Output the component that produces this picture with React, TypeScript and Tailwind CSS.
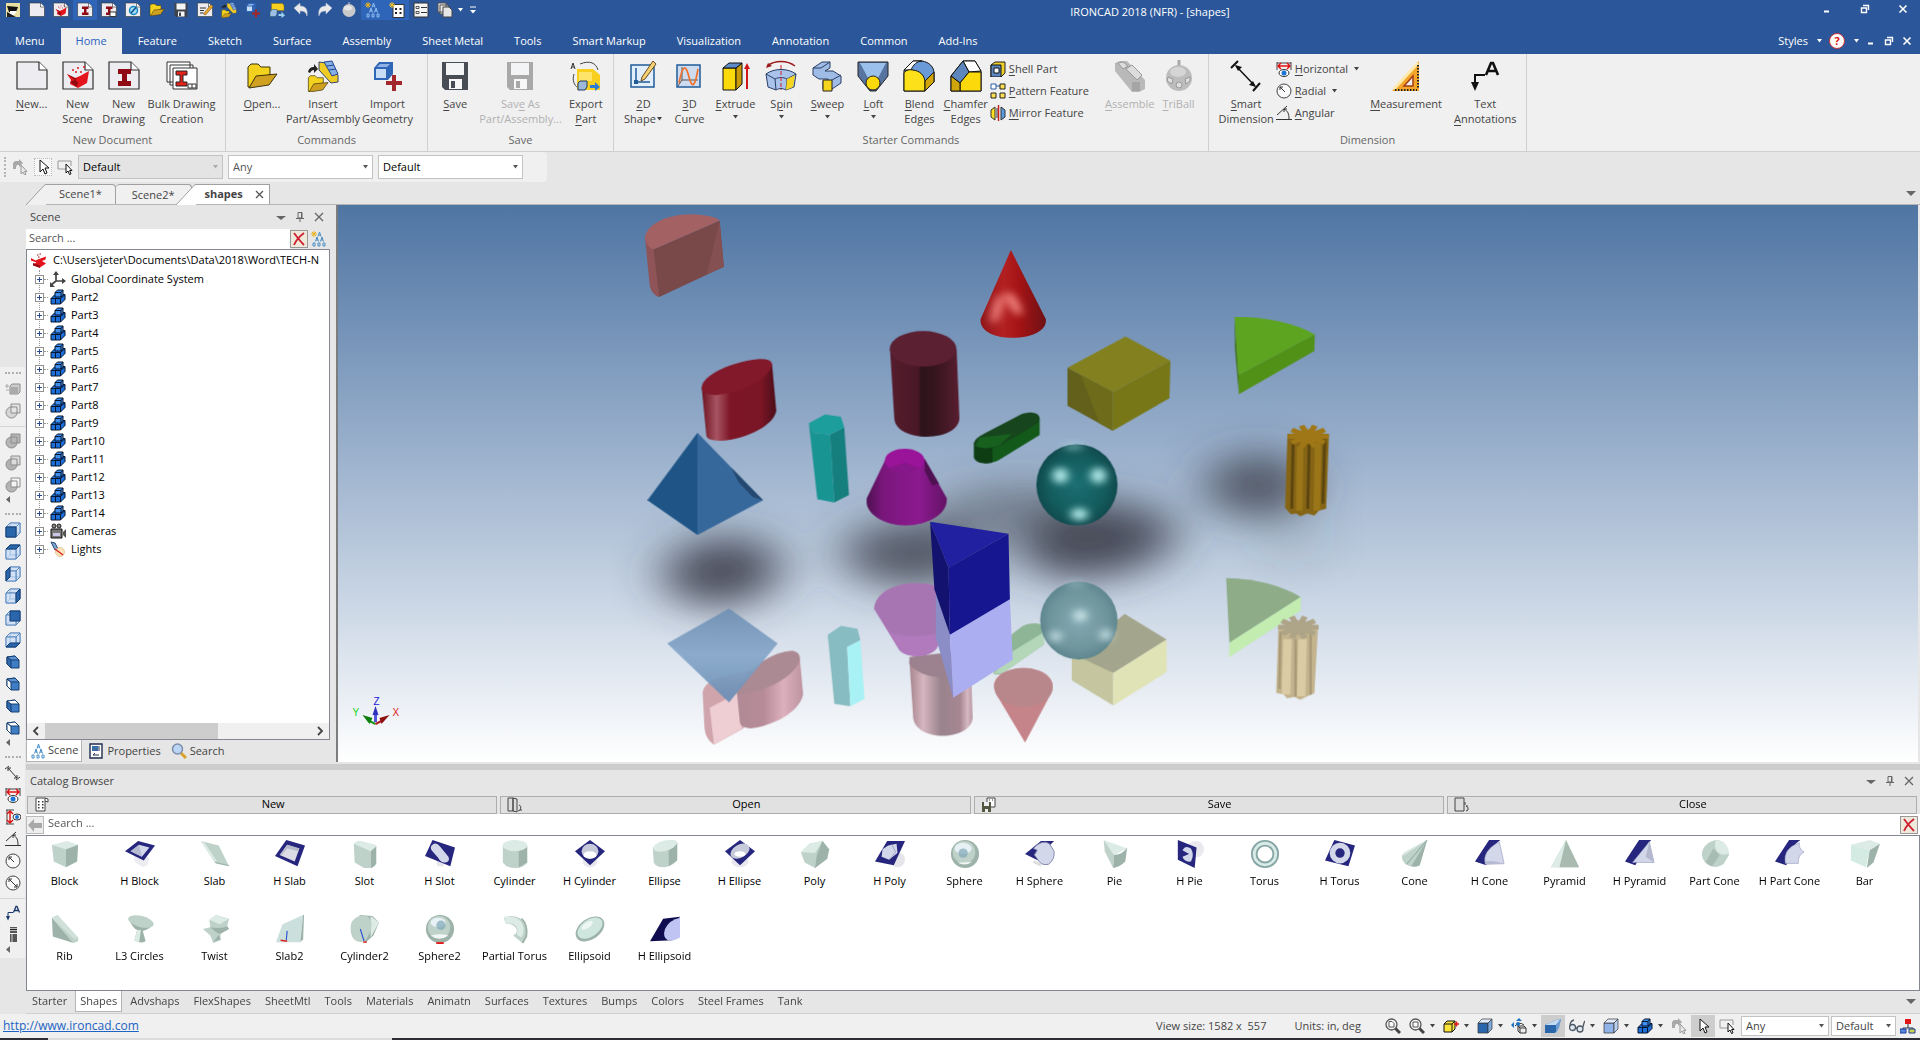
import React from 'react';

type Kids = { children?: React.ReactNode };

const Ico = ({ size = 16, box = 16, children }: Kids & { size?: number; box?: number }) => (
  <svg width={size} height={size} viewBox={`0 0 ${box} ${box}`} className="shrink-0" aria-hidden="true">
    {children}
  </svg>
);

// "_" marks the keyboard mnemonic, e.g. "Sav_e"
const Mnemonic = ({ text }: { text: string }) => {
  const at = text.indexOf('_');
  if (at < 0) return <span>{text}</span>;
  return (
    <span>
      {text.slice(0, at)}
      <span className="underline underline-offset-2">{text[at + 1]}</span>
      {text.slice(at + 2)}
    </span>
  );
};

const Caret = ({ className = 'text-[#444]' }: { className?: string }) => (
  <svg width="7" height="4" viewBox="0 0 7 4" className={`shrink-0 ${className}`} aria-hidden="true">
    <path d="M1 0h5L3.500 3.500z" fill="currentColor" />
  </svg>
);

/* ---------- shared glyphs ---------- */

const page = (
  <>
    <path d="M1 2h22l8 8v19H1z" fill="#ececf1" stroke="#333" strokeWidth="1.200" />
    <path d="M23 2v8h8" fill="#fff" stroke="#333" strokeWidth="1.200" />
  </>
);
const beam = <path d="M10 9h13v5h-4v7h4v5H10v-5h4v-7h-4z" fill="#8f0a12" />;
const redBlob = (
  <>
    <path d="M5 14l8 4 5-2 9-5-2 12-9 5-8-4 1-4z" fill="#e3141c" />
    <path d="M5 14l10 5-7 3 7 5 1-5z" fill="#8f0a12" />
    <path d="M10 10h2M15 8h2M18 12h2M21 7h2M13 12h2" stroke="#e3141c" strokeWidth="1.500" />
  </>
);
const folder = (
  <>
    <path d="M2 7l3-3h7l3 3h9v7L4 27H2z" fill="#f3d21d" stroke="#3d3208" />
    <path d="M3 28l7-12 21-2-8 11z" fill="#d0a021" stroke="#3d3208" />
  </>
);
const floppy = (body: string) => (
  <>
    <path d="M3 2h26v28H6l-3-3z" fill={body} />
    <path d="M7 3h18v12H7z" fill="#f3f4f6" />
    <path d="M10 19h13v10H10z" fill="#f7f7f7" />
    <path d="M12 21h4v7h-4z" fill={body} />
  </>
);
const cubeAdd = (
  <>
    <path d="M2 8l5-6h14v12l-5 6H2z" fill="#2f66b8" />
    <path d="M4 9h10v9H4z" fill="#c9dcf5" />
    <path d="M5 7l3-3h10l-3 3z" fill="#8fb3e4" />
    <path d="M20 15h4v6h6v4h-6v6h-4v-6h-6v-4h6z" fill="#a3262a" />
  </>
);
const insertPart = (
  <>
    <path d="M1 12c1-4 3-5 6-5V4l4 5-4 4v-3c-2 0-3 1-4 3z" fill="#222" />
    <path d="M12 2l7 1 12 12v7l-7 1-12-13z" fill="#f0cb23" stroke="#33456b" />
    <path d="M17 2l8-1 6 13-6 2z" fill="#86aee6" stroke="#27468c" />
    <path d="M20 6l7-1M22 10l7-1" stroke="#27468c" />
    <g transform="translate(0 13) scale(.68)">{folder}</g>
  </>
);
const exportPart = (
  <>
    <path d="M1 9l2-6 2 6M2 7h2" stroke="#333" fill="none" />
    <path d="M10 4c10-4 16-1 18 6M4 14c-2 6 0 11 4 14" stroke="#444" fill="none" />
    <path d="M7 9h16l7 6v15H7z" fill="#f8cf1e" />
    <path d="M9 12h13v9H9z" fill="#ffe46a" />
    <path d="M8 23l2-2h7v6l-2 3H8z" fill="#9db9d8" stroke="#1f3864" />
    <path d="M20 25h5v-3l5 5-5 4v-3h-5z" fill="#2b7bd6" />
  </>
);
const bluePart = (
  <>
    <path d="M1 9.500l4-4h10v5L10.500 15H1z" fill="#1c6fd8" stroke="#04152e" />
    <path d="M1 9.500h9.500V15M10.500 9.500l4.500-4" fill="none" stroke="#04152e" />
    <path d="M5 3.500L7.500 1H13v4.500L11 8H5z" fill="#3f8ff0" stroke="#04152e" />
    <path d="M5 3.500h6V8M11 3.500L13 1M5.500 10v5" fill="none" stroke="#04152e" />
  </>
);
const cursor = <path d="M5 1v12l3-3 2 5 2-1-2-5h4z" fill="#fff" stroke="#111" />;
const boxCursor = (
  <>
    <path d="M10 10H1V2h13v5" fill="none" stroke="#999" />
    <path d="M9 5v9l2-2 1.500 3.500 1.500-.6-1.400-3.400H15z" fill="#fff" stroke="#111" />
  </>
);
const grayCursor = (
  <>
    <path d="M1 10V4l2-2h4V0l4 4-4 4V6H5L4 8v2z" fill="#a9a9a9" />
    <path d="M9 6v9l2-2 1.500 3 1.500-.6-1.400-3H15z" fill="#e8e8e8" stroke="#999" />
  </>
);
const treeLetters = (star: boolean, c: string) => (
  <>
    {star && <path d="M3 0v6M0 3h6M1 1l4 4M5 1L1 5" stroke="#e8b21c" />}
    <path d="M7 5.500L8.500 1 10 5.500M7.500 4h2M4.500 10.500L6 6l1.500 4.500M9.500 10.500L11 6l1.500 4.500M5 9h2M10 9h2" fill="none" stroke={c} />
    <path d="M2 15h2v-3H2zM7 15h2v-3H7zM12 15h2v-3h-2z" fill="none" stroke={c} />
  </>
);
const catalogGlyph = (
  <>
    <path d="M2 1h9v13H2zM11 1l3 1v3l-3-1" fill="#fff" stroke="#444" />
    <path d="M4 4h1.500v1.500H4zM8 4h1.500v1.500H8zM4 7h1.500v1.500H4zM8 7h1.500v1.500H8zM4 10h1.500v1.500H4zM8 10h1.500v1.500H8z" fill="#333" />
  </>
);
const redX = <path d="M3 2c3 4 6 8 10 12M13 2C9 5 5 9 3 14" stroke="#cf2030" strokeWidth="1.800" fill="none" />;

/* ---------- quick access bar ---------- */

const quick: { name: string; on?: boolean; box?: number; art: React.ReactNode }[] = [
  { name: 'New', box: 32, art: page },
  { name: 'New Scene', box: 32, art: <>{page}{redBlob}</> },
  { name: 'New Drawing', on: true, box: 32, art: <>{page}{beam}</> },
  { name: 'Bulk Drawing', box: 32, art: <>{page}{beam}<path d="M18 20h12v9H18z" fill="#fff" stroke="#333" strokeWidth="2" /></> },
  { name: 'New Document', box: 32, art: <>{page}<circle cx="17" cy="17" r="8" fill="#9fdcf4" stroke="#1686c4" strokeWidth="3" /><path d="M12 22l10-11" stroke="#0b4f86" strokeWidth="3" /></> },
  { name: 'Open', box: 32, art: folder },
  { name: 'Save', box: 32, art: floppy('#3f444c') },
  { name: 'Edit', box: 32, art: <>{page}<path d="M6 12h12M6 17h8M6 22h7" stroke="#333" strokeWidth="2" /><path d="M13 24L28 5l4 4-15 17z" fill="#f0a929" stroke="#5c3a06" /></> },
  { name: 'Insert Part', box: 32, art: insertPart },
  { name: 'Import Geometry', box: 32, art: cubeAdd },
  { name: 'Export Part', box: 32, art: <><path d="M5 3h22l3 4v10H5z" fill="#f8cf1e" stroke="#8a6d08" /><path d="M2 20l4-5h10v9l-3 5H2z" fill="#9dc0e2" stroke="#27506f" /><path d="M19 24h6v-5l7 8-7 5v-4h-6z" fill="#9ad0ee" /></> },
  { name: 'Undo', art: <path d="M1 6l6-5v3c6 0 8 4 7 10-1-4-3-5-7-5v3z" fill="#e9e9e9" stroke="#b9c4d8" strokeWidth=".5" /> },
  { name: 'Redo', art: <path d="M15 6L9 1v3C3 4 1 8 2 14c1-4 3-5 7-5v3z" fill="#e9e9e9" stroke="#b9c4d8" strokeWidth=".5" /> },
  { name: 'TriBall', art: <><path d="M8 0v4" stroke="#ccc" /><circle cx="8" cy="8.500" r="6.500" fill="#c9c9c9" /><ellipse cx="7" cy="6" rx="4" ry="2.500" fill="#e6e6e6" /></> },
  { name: 'Scene Browser', on: true, art: treeLetters(true, '#8fbcf0') },
  { name: 'Catalog Browser', on: true, art: <><path d="M4 2.500h11v13H4z" fill="#fff" stroke="#333" /><path d="M6 6h2v2H6zM10.500 6h2v2h-2zM6 10h2v2H6zM10.500 10h2v2h-2z" fill="#222" /><path d="M3 0v6M0 3h6M1 1l4 4M5 1L1 5" stroke="#f3c52c" /></> },
  { name: 'Properties', art: <><path d="M1 1h14v14H1z" fill="#f4f4f4" stroke="#333" /><path d="M3 4.500h3v2H3zM3 9.500h3v2H3z" fill="none" stroke="#333" strokeWidth=".8" /><path d="M8 5.500h6M8 10.500h6" stroke="#333" /></> },
  { name: 'Windows', art: <><path d="M1 1h8v9H1zM3 3h8v9H3z" fill="#e6e6e6" stroke="#555" /><path d="M6 5h6l3 3v7H6z" fill="#e6e6e6" stroke="#444" /></> },
];

const WindowKeys = ({ gap }: { gap: string }) => (
  <div className={`flex items-center ${gap} text-white`}>
    <button aria-label="Minimize"><Ico size={10} box={10}><path d="M2 7.500h5" stroke="#fff" strokeWidth="2" /></Ico></button>
    <button aria-label="Restore"><Ico size={10} box={10}><path d="M3 1.500h5.500V6M1.500 4h5v4.500h-5z" fill="none" stroke="#fff" strokeWidth="1.400" /></Ico></button>
    <button aria-label="Close"><Ico size={10} box={10}><path d="M1.500 1.500l7 7M8.500 1.500l-7 7" stroke="#fff" strokeWidth="1.600" /></Ico></button>
  </div>
);

const TitleBar = () => (
  <header className="flex h-7 items-start bg-[#2b579a] text-white">
    <div className="flex items-center">
      <div className="flex h-5 w-[25px] items-center justify-center">
        <Ico><path d="M1 1h14v14H1z" fill="#e9dfa0" /><path d="M2 4l11 1-2 5H4z" fill="#111" /><path d="M5 9h7l-3 4-4 1z" fill="#fff" /><path d="M2 10l9 5H2z" fill="#222" /></Ico>
      </div>
      {quick.map((q) => (
        <button key={q.name} aria-label={q.name} className={`flex h-5 w-6 items-center justify-center ${q.on ? 'bg-[#2f65b8]' : ''}`}>
          <Ico box={q.box}>{q.art}</Ico>
        </button>
      ))}
      <button aria-label="Window list"><Caret className="text-white" /></button>
      <button aria-label="Customize" className="ml-1"><Ico size={10} box={10}><path d="M2 2h6" stroke="#fff" /><path d="M2 5h6L5 8.500z" fill="#fff" /></Ico></button>
    </div>
    <div className="flex-1 pt-1 text-center text-[11px] leading-4">IRONCAD 2018 (NFR) - [shapes]</div>
    <div className="flex pt-1 pr-3"><WindowKeys gap="gap-7" /></div>
  </header>
);

const menus = ['Menu', 'Home', 'Feature', 'Sketch', 'Surface', 'Assembly', 'Sheet Metal', 'Tools', 'Smart Markup', 'Visualization', 'Annotation', 'Common', 'Add-Ins'];

const MenuBar = () => (
  <nav className="flex h-[26px] items-stretch gap-px bg-[#2b579a] text-[11px] text-white">
    {menus.map((m) => (
      <button key={m} className={`px-[15px] ${m === 'Home' ? 'bg-[#f0f0f0] text-[#2a63c0]' : ''}`}>{m}</button>
    ))}
    <div className="ml-auto flex items-center gap-1.5 pr-2">
      <button className="flex items-center gap-2">Styles <Caret className="text-white" /></button>
      <button aria-label="Help" className="flex items-center gap-2">
        <span className="flex h-4 w-4 items-center justify-center rounded-full border border-[#c33] bg-white text-[11px] font-bold text-[#d11]">?</span>
        <Caret className="text-white" />
      </button>
      <WindowKeys gap="gap-2" />
    </div>
  </nav>
);

/* ---------- ribbon ---------- */

type Big = { label: [string, string?]; art: React.ReactNode; drop?: 'below' | 'inline'; off?: boolean };

const BigButton = ({ label, art, drop, off }: Big) => (
  <button disabled={off} className={`flex min-w-[44px] flex-col items-center pt-1.5 leading-[15px] ${off ? 'text-[#b1b1b1]' : 'text-[#444]'}`}>
    <Ico size={32} box={32}>{art}</Ico>
    <span className="pt-1 whitespace-nowrap"><Mnemonic text={label[0]} /></span>
    {label[1] && (
      <span className="flex items-center whitespace-nowrap">
        <Mnemonic text={label[1]} />
        {drop === 'inline' && <Caret />}
      </span>
    )}
    {drop === 'below' && <span className="pt-1"><Caret /></span>}
  </button>
);

const SmallButton = ({ label, art, drop }: { label: string; art: React.ReactNode; drop?: boolean }) => (
  <button className="flex h-[22px] items-center gap-[3px] whitespace-nowrap text-[#444]">
    <Ico>{art}</Ico>
    <Mnemonic text={label} />
    {drop && <span className="pl-0.5"><Caret /></span>}
  </button>
);

const Group = ({ title, width, children }: Kids & { title: string; width: string }) => (
  <section className={`flex shrink-0 flex-col border-r border-[#d0d0d0] ${width}`}>
    <div className="flex flex-1 items-start justify-center gap-0.5">{children}</div>
    <h2 className="pb-1 text-center leading-[15px] text-[#666]">{title}</h2>
  </section>
);

const newDoc: Big[] = [
  { label: ['_New...'], art: page },
  { label: ['New', 'Scene'], art: <>{page}{redBlob}</> },
  { label: ['New', 'Drawing'], art: <>{page}{beam}</> },
  { label: ['Bulk Drawing', 'Creation'], art: <><path d="M1 2h23v20H1zM4 5h23v20H4z" fill="#fff" stroke="#333" /><path d="M7 8h18l6 0v21H7z" fill="#fff" stroke="#333" /><path d="M10 11h11v4h-4v7h4v4H10v-4h4v-7h-4z" fill="#e2231a" stroke="#222" /><path d="M22 24h8v4h-8zM26 24v4" fill="none" stroke="#333" /></> },
];
const commands: Big[] = [
  { label: ['_Open...'], art: folder },
  { label: ['Insert', 'Part/Assembly'], art: insertPart },
  { label: ['Import', 'Geometry'], art: cubeAdd },
];
const saves: Big[] = [
  { label: ['_Save'], art: floppy('#474c55') },
  { label: ['Sav_e As', 'Part/Assembly...'], art: floppy('#a8a8a8'), off: true },
  { label: ['Export', '_Part'], art: exportPart },
];
const starters: Big[] = [
  { label: ['_2D', 'Shape'], drop: 'inline', art: <><path d="M4 5h23v22H4z" fill="#e3eefb" stroke="#1f5c99" strokeWidth="1.500" /><path d="M9 8v14h14" fill="none" stroke="#1f5c99" strokeWidth="1.500" /><path d="M7 20h4v4H7z" fill="#1f5c99" /><path d="M15 17L26 1l3 3-11 15-4 2z" fill="#f5d173" stroke="#6a4a1c" /></> },
  { label: ['_3D', 'Curve'], art: <><path d="M4 5h23v22H4z" fill="#cfdcf0" stroke="#1f5c99" strokeWidth="1.500" /><path d="M9 7v13h16M9 20l-4 6" fill="none" stroke="#555" /><path d="M6 23c4-20 7-18 10-6s6 10 9-8" fill="none" stroke="#f0702a" strokeWidth="1.700" /></> },
  { label: ['_Extrude'], drop: 'below', art: <><path d="M4 8h13v22H4z" fill="#fbd90a" stroke="#111" /><path d="M17 8l6-5v21l-6 6z" fill="#c99b06" stroke="#111" /><path d="M4 8l6-5h13l-6 5z" fill="#5d8cc9" stroke="#111" /><path d="M28 29V7" stroke="#d01818" strokeWidth="2" /><path d="M25 9l3-6 3 6z" fill="#d01818" /></> },
  { label: ['S_pin'], drop: 'below', art: <><path d="M2 6c8-6 20-6 28 0" fill="none" stroke="#9b1c1c" strokeWidth="1.500" /><path d="M1 8l2-5 4 3z" fill="#9b1c1c" /><path d="M1 14c8-6 22-6 30 0l-2 13-8 3c-4-2-6-2-10 0l-8-3z" fill="#a9c3ea" stroke="#2a3f66" /><path d="M1 14l9 5c4-2 8-2 12 0l9-5M10 19l1 11M22 19l-1 11" fill="none" stroke="#2a3f66" /><path d="M22 19l8-4-2 12-7 3z" fill="#f5d51d" /><path d="M16 5v25" stroke="#c22" strokeDasharray="4 2" /></> },
  { label: ['_Sweep'], drop: 'below', art: <><path d="M2 8l9-6h8v6l-5 3h8l8 5v7l-9 6H12v-8h5v-2H8l-6-4z" fill="#9fbce6" stroke="#2a3f66" /><path d="M12 20h9v11h-9z" fill="#f5d51d" stroke="#222" /><path d="M2 8h8l9-6M21 20l9-5" fill="none" stroke="#2a3f66" /></> },
  { label: ['_Loft'], drop: 'below', art: <><path d="M1 2h30v14L19 31h-6L1 16z" fill="#56749f" stroke="#222" /><path d="M3 3h26l-8 15H11z" fill="#9cc0ec" /><circle cx="16" cy="23" r="7" fill="#fbd90a" stroke="#222" /></> },
  { label: ['_Blend', 'Edges'], art: <><path d="M1 10L10 1h9c7 1 12 6 12 12v9l-9 9H1z" fill="#6a9bd8" stroke="#111" /><path d="M1 10L10 1h9c-5 0-9 4-11 9z" fill="#fff" stroke="#111" /><path d="M1 13c1-2 4-4 9-3 7 1 11 5 12 11v10H1z" fill="#fbe01a" stroke="#111" /><path d="M22 21l9-9v10l-9 9z" fill="#d1a60a" stroke="#111" /></> },
  { label: ['_Chamfer', 'Edges'], art: <><path d="M1 16L13 1h12l6 10v20H1z" fill="#fbe01a" stroke="#111" /><path d="M13 1h12l6 10-12 1z" fill="#fff" stroke="#111" /><path d="M1 16L13 1l6 11-9 11z" fill="#5d86bd" stroke="#111" /><path d="M10 23l9-11h12v19H10z" fill="#fbd90a" stroke="#111" /><path d="M1 16l9 7v8H1z" fill="#d1a60a" stroke="#111" /></> },
];
const lateStarters: Big[] = [
  { label: ['_Assemble'], off: true, art: <><path d="M1 3l5-2h7l18 19v9l-6 3h-7L1 11z" fill="#b9b9b9" /><path d="M12 9l6-4 10 10-5 5zM4 3l5-1 5 4-5 3z" fill="#dcdcdc" stroke="#999" /><path d="M18 22h8v9h-8z" fill="#a5a5a5" /></> },
  { label: ['_TriBall'], off: true, art: <><path d="M16 0v6" stroke="#aaa" strokeWidth="3" /><circle cx="16" cy="18" r="13" fill="#bdbdbd" /><ellipse cx="15" cy="12" rx="8" ry="5" fill="#d5d5d5" /><path d="M5 17l5 2-1 5-5-3zM27 17l-5 2 1 5 4-3z" fill="#ddd" stroke="#999" /><circle cx="16" cy="25" r="3" fill="#ddd" stroke="#999" /></> },
];

const shellIcon = <><path d="M1 4l4-3h10v11l-4 4H1z" fill="#f0cf2a" stroke="#222" /><path d="M1 4h10v12H1z" fill="#5d86bd" stroke="#111" /><path d="M4 7h5v5H4z" fill="#fff" stroke="#111" /></>;
const patternIcon = <><path d="M1 1h5v5H1zM6 3h4" fill="#fff" stroke="#2a5ea8" /><path d="M10 1h5v5h-5zM1 10h5v5H1zM10 10h5v5h-5z" fill="#fbdf55" stroke="#222" /></>;
const mirrorIcon = <><path d="M5 2L1 5v7l4 3zM7 3v10" fill="#fbdf20" stroke="#333" /><path d="M11 2l4 3v7l-4 3z" fill="#5b9be0" stroke="#333" /><path d="M8.500 0v16" stroke="#c22" strokeWidth="1.500" /></>;
const horizontalDim = <><path d="M1 1v8M15 1v8M1 2h14" stroke="#444" fill="none" /><path d="M2 5h12M5 2L2 5l3 3M11 2l3 3-3 3" stroke="#e01010" fill="none" strokeWidth="1.400" /><ellipse cx="8" cy="12" rx="5" ry="3.500" fill="#fff" stroke="#333" /><circle cx="8" cy="12" r="2.500" fill="#1b74d8" /></>;
const verticalDim = <><path d="M1 1h8M1 15h8M2 1v14" stroke="#444" fill="none" /><path d="M5 2v12M2 5l3-3 3 3M2 11l3 3 3-3" stroke="#e01010" fill="none" strokeWidth="1.400" /><ellipse cx="12" cy="8" rx="4" ry="3" fill="#fff" stroke="#333" /><circle cx="12" cy="8" r="2" fill="#1b74d8" /></>;
const radialDim = <><circle cx="8" cy="8" r="7" fill="#fafafa" stroke="#444" /><path d="M9 9L4 4M4 7V4h3" stroke="#333" fill="none" /></>;
const diameterDim = <><circle cx="8" cy="8" r="7" fill="#fafafa" stroke="#444" /><path d="M4 4l8 8M4 7V4h3M12 9v3H9" stroke="#333" fill="none" /></>;
const angularDim = <><path d="M1 10L11 1M0 14.500h16" stroke="#333" fill="none" /><path d="M8 4c4 2 5 5 5 10M8 7V4h3" stroke="#333" fill="none" /></>;
const smartDim = <><path d="M1 8L8 1M23 31l7-8" stroke="#111" strokeWidth="2" /><path d="M6 6l19 20" stroke="#111" strokeWidth="1.500" /><path d="M5 5l7 2-4 4zM26 27l-7-2 4-4z" fill="#111" /></>;
const textNote = (c: string) => (
  <><path d="M6 28V15h10" fill="none" stroke={c} strokeWidth="2" /><path d="M2 22h8l-4 9z" fill={c} /><path d="M17 15l5-12h2l5 12M19 11h8" fill="none" stroke={c} strokeWidth="2.600" /></>
);
const setSquare = <><path d="M2 31L29 1v30z" fill="#f4a62a" /><path d="M4 29L28 3" stroke="#ffe9a8" strokeWidth="3" /><path d="M14 26l9-10v10z" fill="#f0f0f0" stroke="#a33b16" strokeWidth="1.500" /><path d="M28 5v24M5 30h22" stroke="#222" strokeDasharray="1.500 1.500" strokeWidth="2" /></>;

const Ribbon = () => (
  <div className="flex h-[98px] border-b border-[#cfcfcf] bg-[#f0f0f0] text-[11px]">
    <Group title="New Document" width="w-[226px]">{newDoc.map((b) => <BigButton key={b.label.join()} {...b} />)}</Group>
    <Group title="Commands" width="w-[202px]">{commands.map((b) => <BigButton key={b.label.join()} {...b} />)}</Group>
    <Group title="Save" width="w-[186px]">{saves.map((b) => <BigButton key={b.label.join()} {...b} />)}</Group>
    <Group title="Starter Commands" width="w-[595px]">
      {starters.map((b) => <BigButton key={b.label.join()} {...b} />)}
      <div className="flex flex-col pt-1 pr-3.5">
        <SmallButton label="_Shell Part" art={shellIcon} />
        <SmallButton label="_Pattern Feature" art={patternIcon} />
        <SmallButton label="_Mirror Feature" art={mirrorIcon} />
      </div>
      {lateStarters.map((b) => <BigButton key={b.label.join()} {...b} />)}
    </Group>
    <Group title="Dimension" width="w-[318px]">
      <BigButton label={['_Smart', 'Dimension']} art={smartDim} />
      <div className="flex flex-col pt-1 pr-2">
        <SmallButton label="_Horizontal" art={horizontalDim} drop />
        <SmallButton label="_Radial" art={radialDim} drop />
        <SmallButton label="_Angular" art={angularDim} />
      </div>
      <BigButton label={['_Measurement']} art={setSquare} />
      <div className="pl-2.5"><BigButton label={['Text', '_Annotations']} art={textNote('#111')} /></div>
    </Group>
  </div>
);

/* ---------- selection bar and document tabs ---------- */

const Combo = ({ label, value, size, off }: { label: string; value: string; size: string; off?: boolean }) => (
  <div className={`relative flex items-center ${size}`}>
    <select aria-label={label} disabled={off} defaultValue={value} className={`h-full w-full appearance-none border border-[#c3c3c3] px-1 ${off ? 'bg-[#e4e4e4]' : 'bg-white'}`}>
      <option>{value}</option>
    </select>
    <span className="pointer-events-none absolute right-1"><Caret className={off ? 'text-[#aaa]' : 'text-[#555]'} /></span>
  </div>
);

const SelectionBar = () => (
  <div className="flex h-8 bg-[#e6e6e6] text-[11px]">
    <div className="flex h-[30px] items-center rounded-r bg-[#f0f0f0] pr-6 pl-1">
      <div className="h-5 border-l-2 border-dotted border-[#b5b5b5]" />
      <button aria-label="Select tool" className="flex w-7 justify-center"><Ico>{grayCursor}</Ico></button>
      <button aria-label="Pick" className="flex h-[18px] w-[18px] items-center justify-center border border-dotted border-[#bbb] bg-[#f7f7f7]"><Ico>{cursor}</Ico></button>
      <button aria-label="Box select" className="flex w-[26px] justify-center"><Ico>{boxCursor}</Ico></button>
      <div className="flex gap-[5px] text-black">
        <Combo label="Configuration" value="Default" size="h-6 w-[145px]" off />
        <div className="text-[#555]"><Combo label="Filter" value="Any" size="h-6 w-[145px]" /></div>
        <Combo label="Style" value="Default" size="h-6 w-[145px]" />
      </div>
    </div>
  </div>
);

const Slant = ({ fill }: { fill: string }) => (
  <svg width="20" height="21" viewBox="0 0 20 21" className="relative shrink-0" aria-hidden="true">
    <path d="M0 21L18 1.500Q19 .5 20 .5V21z" fill={fill} />
    <path d="M0 21L18 1.500Q19 .5 20 .5" fill="none" stroke="#a0a0a0" />
  </svg>
);

const DocTabs = () => (
  <div className="flex h-[21px] items-stretch border-b border-[#b5b5b5] text-[11px] text-[#444]">
    <button className="flex"><Slant fill="#f0f0f0" /><span className="h-full rounded-tr-sm border-t border-r border-[#a0a0a0] bg-[#f0f0f0] px-[13px] leading-[18px]">Scene1*</span></button>
    <button className="rounded-t-sm border-t border-r border-[#a0a0a0] bg-[#f0f0f0] px-4 leading-[18px]">Scene2*</button>
    <div className="-ml-4 flex">
      <Slant fill="#fff" />
      <div className="relative flex items-center gap-3 border-t border-r border-[#a0a0a0] bg-white pr-1 pl-[9px]">
        <button className="font-bold">shapes</button>
        <button aria-label="Close shapes"><Ico size={10} box={10}><path d="M1 1l7 7M8 1L1 8" stroke="#555" strokeWidth="1.300" /></Ico></button>
      </div>
    </div>
    <button aria-label="Tab list" className="mr-1 ml-auto self-center"><Ico size={10} box={10}><path d="M0 2h10L5 7z" fill="#666" /></Ico></button>
  </div>
);

const PanelKeys = () => (
  <div className="ml-auto flex gap-[9px] pr-1.5">
    <button aria-label="Panel menu"><Ico size={10} box={10}><path d="M0 4h10L5 8z" fill="#666" /></Ico></button>
    <button aria-label="Pin"><Ico size={10} box={10}><path d="M3 .5h4V6H3zM1 6.500h8M5 7v3M6.500 1v5" fill="none" stroke="#666" /></Ico></button>
    <button aria-label="Close panel"><Ico size={10} box={10}><path d="M1 1l8 8M9 1L1 9" stroke="#666" strokeWidth="1.300" /></Ico></button>
  </div>
);

/* ---------- left tool strip ---------- */

const faces = {
  back: 'M5 1h10v10H5z',
  bottom: 'M1 15l4-4h10l-4 4z',
  left: 'M1 5l4-4v10l-4 4z',
  right: 'M11 5l4-4v10l-4 4z',
  top: 'M1 5l4-4h10l-4 4z',
  front: 'M1 5h10v10H1z',
};
const viewCube = (face: keyof typeof faces) => (
  <>
    {Object.values(faces).map((d) => <path key={d} d={d} fill="#cfe0f5" fillOpacity=".7" stroke="#4c7fb8" strokeWidth=".8" />)}
    <path d={faces[face]} fill="#2a66ab" stroke="#173f70" />
  </>
);
const isoCube = (open: 'none' | 'left' | 'top' | 'both') => (
  <>
    <path d="M2 3l8-1 4 4v8l-8 0-4-4z" fill="#3f7dc4" stroke="#173f70" />
    <path d="M2 3l4 3v8l-4-4z" fill={open === 'left' || open === 'both' ? '#fff' : '#2f6bb0'} stroke="#173f70" />
    <path d="M2 3l8-1 4 4H6z" fill={open === 'top' || open === 'both' ? '#fff' : '#5b93d4'} stroke="#173f70" />
  </>
);
const boolIcon = (a: string, b: string) => (
  <><path d="M6 1h9v9H6z" fill={a} stroke="#8d8d8d" /><circle cx="6.500" cy="9.500" r="5.500" fill={b} stroke="#8d8d8d" /><path d="M6 4h6v6H6z" fill={a} stroke="#8d8d8d" /></>
);

const strip: ({ name: string; box?: number; art: React.ReactNode } | 'dots' | 'line' | 'arrow')[] = [
  'dots',
  { name: 'Size box', art: <><path d="M0 5h4M2 3v4M1 9h3" stroke="#aaa" /><path d="M5 5l2-2h8v8l-2 2H5z" fill="#ccc" stroke="#8d8d8d" /><path d="M6 6h7v6H6z" fill="#aaa" /></> },
  { name: 'Boolean', art: boolIcon('#e4e4e4', '#d5d5d5') },
  'line',
  { name: 'Union', art: boolIcon('#b5b5b5', '#b5b5b5') },
  { name: 'Subtract', art: boolIcon('#dcdcdc', '#b0b0b0') },
  { name: 'Intersect', art: boolIcon('#f4f4f4', '#b5b5b5') },
  'arrow',
  'dots',
  { name: 'Front view', art: viewCube('front') },
  { name: 'Top view', art: viewCube('top') },
  { name: 'Left view', art: viewCube('left') },
  { name: 'Right view', art: viewCube('right') },
  { name: 'Back view', art: viewCube('back') },
  { name: 'Bottom view', art: viewCube('bottom') },
  { name: 'Isometric 1', art: isoCube('none') },
  { name: 'Isometric 2', art: isoCube('left') },
  { name: 'Isometric 3', art: isoCube('top') },
  { name: 'Isometric 4', art: isoCube('both') },
  'arrow',
  'dots',
  { name: 'Smart dimension', art: <><path d="M0 4l4-3M11 15l4-3M3 3l9 10M3 6V3h3M12 10v3H9" fill="none" stroke="#333" /></> },
  { name: 'Horizontal dimension', art: horizontalDim },
  { name: 'Vertical dimension', art: verticalDim },
  { name: 'Angular dimension', art: angularDim },
  { name: 'Radial dimension', art: radialDim },
  { name: 'Diameter dimension', art: diameterDim },
  'line',
  { name: 'Text annotation', box: 32, art: textNote('#1b3a6b') },
  { name: 'Thread', art: <><path d="M5 0h7M5 2.500h7M5 5h7" stroke="#222" strokeWidth="1.500" /><path d="M5 7h7v8H5z" fill="#555" /><path d="M7 7v8" stroke="#aaa" strokeWidth="1.500" /></> },
  'arrow',
];

const ToolStrip = () => (
  <aside className="w-[26px] shrink-0">
    <div className="mt-[183px] flex w-[25px] flex-col items-center bg-[#f0f0f0]">
      {strip.map((s, i) => {
        if (s === 'dots') return <div key={i} className="flex h-[11px] w-4 items-center"><div className="w-full border-t-2 border-dotted border-[#b0b0b0]" /></div>;
        if (s === 'line') return <div key={i} className="flex h-2 w-full items-center"><div className="w-full border-t border-[#d5d5d5]" /></div>;
        if (s === 'arrow') return <button key={i} aria-label="More tools" className="flex h-3 w-4 items-start"><Ico size={8} box={8}><path d="M5 0v7L1 3.500z" fill="#666" /></Ico></button>;
        return <button key={s.name} aria-label={s.name} className="flex h-[22px] w-full items-center justify-center"><Ico box={s.box}>{s.art}</Ico></button>;
      })}
    </div>
  </aside>
);

/* ---------- scene tree ---------- */

const tree: { name: string; art: React.ReactNode }[] = [
  { name: 'Global Coordinate System', art: <><path d="M6 1v9h9M6 10l-5 4" fill="none" stroke="#444" strokeWidth="1.700" /><path d="M3 4l3-4 3 4zM12 7l4 3-4 3zM0 11v5h5z" fill="#444" /></> },
  ...[2, 3, 4, 5, 6, 7, 8, 9, 10, 11, 12, 13, 14].map((n) => ({ name: `Part${n}`, art: bluePart })),
  { name: 'Cameras', art: <><circle cx="4" cy="3" r="2" fill="#888" stroke="#222" /><circle cx="9" cy="3" r="2" fill="#888" stroke="#222" /><path d="M1 6h11v9H1z" fill="#777" stroke="#111" /><path d="M13 9l3-3v9l-3-3z" fill="#555" /><path d="M3 10h7v3H3z" fill="#c9c6e6" /></> },
  { name: 'Lights', art: <><path d="M1 1l4 1 3 6-3 1z" fill="#7fa8d8" stroke="#24476f" /><circle cx="10" cy="11" r="4.500" fill="#f8e4bd" stroke="#d8b070" strokeWidth=".6" /><path d="M5 8l8 6" stroke="#d22" strokeWidth="1.400" /></> },
];

const ScenePanel = () => (
  <section className="flex w-[304px] shrink-0 flex-col text-[11px] text-[#444]">
    <div className="flex h-6 shrink-0 items-center pl-1">Scene<PanelKeys /></div>
    <div className="flex h-5 shrink-0 items-center">
      <input aria-label="Search scene" placeholder="Search ..." className="h-full min-w-0 flex-1 bg-white px-[3px] pb-1 placeholder:text-[#555]" />
      <button aria-label="Clear search" className="flex h-[18px] w-[18px] items-center justify-center border border-[#999] bg-[#efe9dc]"><Ico>{redX}</Ico></button>
      <button aria-label="Filter tree" className="flex w-[22px] justify-center"><Ico>{treeLetters(true, '#4a90c8')}</Ico></button>
    </div>
    <div className="flex min-h-0 flex-1 flex-col border border-[#828790] bg-white text-black">
      <div className="flex-1">
        <div className="flex h-5 items-center gap-1.5 pt-px pl-1 whitespace-nowrap">
          <Ico box={32}><path d="M0 10l9 5 7-3 14-5-1 6-7 3 8 5-12 8-14-6 7-4-11-4z" fill="#e3141c" /><path d="M4 20l14 5v5L4 25z" fill="#9b0a12" /><path d="M12 4h3M17 2h3M14 8h3" stroke="#9b0a12" strokeWidth="2" /></Ico>
          C:\Users\jeter\Documents\Data\2018\Word\TECH-N
        </div>
        <ul className="ml-3 border-l border-dotted border-[#999]">
          {tree.map((t) => (
            <li key={t.name} className="flex h-[18px] items-center">
              <button aria-label={`Expand ${t.name}`} className="-ml-[5px] flex h-[9px] w-[9px] shrink-0 items-center justify-center border border-[#919191] bg-white">
                <Ico size={5} box={5}><path d="M0 2.500h5M2.500 0v5" stroke="#2b4a8f" /></Ico>
              </button>
              <span className="mr-0.5 w-1 border-t border-dotted border-[#999]" />
              <Ico>{t.art}</Ico>
              <span className="pl-[5px]">{t.name}</span>
            </li>
          ))}
        </ul>
      </div>
      <div className="flex h-4 items-center bg-[#f0f0f0]">
        <button aria-label="Scroll left" className="flex w-[18px] justify-center"><Ico size={10} box={10}><path d="M7 1L3 5l4 4" fill="none" stroke="#444" strokeWidth="1.800" /></Ico></button>
        <div className="flex h-full flex-1"><div className="h-full w-[65%] bg-[#cdcdcd]" /></div>
        <button aria-label="Scroll right" className="flex w-[18px] justify-center"><Ico size={10} box={10}><path d="M3 1l4 4-4 4" fill="none" stroke="#444" strokeWidth="1.800" /></Ico></button>
      </div>
    </div>
    <div className="flex h-6 shrink-0 items-start">
      <button className="flex h-[22px] items-center gap-0.5 border border-t-0 border-[#b5b5b5] bg-white px-[3px]"><Ico>{treeLetters(false, '#4a90c8')}</Ico>Scene</button>
      <button className="flex h-[22px] items-center gap-[3px] px-1.5"><Ico><path d="M2 1h12v14H2z" fill="#fff" stroke="#1d2e4d" strokeWidth="1.400" /><path d="M4 3h6v5H4z" fill="#3a6ea5" /><path d="M11 3v5M5 12h6M5 12l2-2" stroke="#1d2e4d" fill="none" /></Ico>Properties</button>
      <button className="flex h-[22px] items-center gap-[3px] px-1"><Ico><path d="M10 10l5 5" stroke="#d9a12a" strokeWidth="3" /><circle cx="6.500" cy="6" r="5" fill="#bcd4f5" stroke="#7d8ea8" strokeWidth="1.500" /></Ico>Search</button>
    </div>
  </section>
);

/* ---------- 3D view ---------- */

// top face of the ten-tooth gear, centred on 0,0
const GearTop = ({ at, fill }: { at: string; fill: string }) => (
  <g transform={at} fill={fill} stroke={fill}>
    <path d="M-43 0H43M-35-18L35 18M-35 18L35-18M-14-30L14 30M-14 30L14-30" strokeWidth="13" />
    <ellipse rx="27" ry="19" />
  </g>
);

const Model = () => (
  <svg viewBox="0 0 1581 557" preserveAspectRatio="xMidYMid slice" className="h-full w-full" role="img" aria-label="shapes scene">
    <defs>
      <linearGradient id="cone" x1="0" x2="1"><stop offset="0" stopColor="#8e1518" /><stop offset=".35" stopColor="#b32022" /><stop offset=".6" stopColor="#a31315" /><stop offset="1" stopColor="#6f1114" /></linearGradient>
      <linearGradient id="drum" x1="0" x2="1"><stop offset="0" stopColor="#561d2d" /><stop offset=".4" stopColor="#4a1826" /><stop offset=".45" stopColor="#2f141c" /><stop offset=".65" stopColor="#35151f" /><stop offset="1" stopColor="#5a1e30" /></linearGradient>
      <linearGradient id="oval" x1="0" x2="1"><stop offset="0" stopColor="#6c1220" /><stop offset=".2" stopColor="#a85462" /><stop offset=".38" stopColor="#7d1728" /><stop offset=".8" stopColor="#7a1626" /><stop offset="1" stopColor="#4b0e18" /></linearGradient>
      <linearGradient id="frustum" x1="0" x2="1"><stop offset="0" stopColor="#4f1152" /><stop offset=".2" stopColor="#7a177c" /><stop offset=".65" stopColor="#8c1a8f" /><stop offset="1" stopColor="#641367" /></linearGradient>
      <radialGradient id="ball"><stop offset="0" stopColor="#1b6f72" /><stop offset=".7" stopColor="#145c5e" /><stop offset="1" stopColor="#104b4f" /></radialGradient>
      <radialGradient id="ghostBall"><stop offset="0" stopColor="#84a9b2" /><stop offset=".75" stopColor="#6f959c" /><stop offset="1" stopColor="#5f878f" /></radialGradient>
      <linearGradient id="ghostDrum" x1="0" x2="1"><stop offset="0" stopColor="#a8858f" /><stop offset=".22" stopColor="#d6b6c0" /><stop offset=".5" stopColor="#99838c" /><stop offset=".8" stopColor="#a78792" /><stop offset=".92" stopColor="#d6b9c3" /><stop offset="1" stopColor="#b596a0" /></linearGradient>
      <linearGradient id="ghostOval" x1="0" x2="1"><stop offset="0" stopColor="#b08a96" /><stop offset=".4" stopColor="#b78c98" /><stop offset=".7" stopColor="#dcb0bc" /><stop offset="1" stopColor="#bd94a0" /></linearGradient>
      <linearGradient id="ghostPyramid" x1="0" x2="0" y1="0" y2="1"><stop offset="0" stopColor="#6f8fb3" /><stop offset=".5" stopColor="#86a7c9" /><stop offset="1" stopColor="#6a8db4" /></linearGradient>
      <filter id="soft" x="-60%" y="-60%" width="220%" height="220%"><feGaussianBlur stdDeviation="52" /></filter>
      <filter id="glow" x="-80%" y="-80%" width="260%" height="260%"><feGaussianBlur stdDeviation="10" /></filter>
    </defs>
    <g transform="translate(283 -5) scale(.472 .357)">
      {/* ground shadows */}
      <g filter="url(#soft)" fill="#3c3f4a">
        <ellipse cx="215" cy="1040" rx="125" ry="95" transform="rotate(-12 215 1040)" opacity=".9" />
        <ellipse cx="620" cy="990" rx="150" ry="95" opacity=".8" />
        <ellipse cx="1010" cy="955" rx="165" ry="100" transform="rotate(-12 1010 955)" opacity=".9" />
        <ellipse cx="850" cy="870" rx="180" ry="75" opacity=".5" />
        <ellipse cx="1350" cy="800" rx="110" ry="90" opacity=".8" />
        <ellipse cx="1420" cy="960" rx="70" ry="60" opacity=".12" />
      </g>

      {/* reflections */}
      <path d="M174 1380Q176 1350 215 1335L330 1300 260 1480 198 1526Q180 1510 178 1480z" fill="#cfa4ab" />
      <path d="M189 1422L250 1380 258 1480 198 1526z" fill="#efced3" />
      <path d="M247 1385C260 1310 330 1262 365 1263Q380 1266 380 1285L387 1385C380 1435 320 1475 275 1480Q255 1478 253 1465z" fill="url(#ghostOval)" />
      <path d="M247 1385C260 1310 330 1262 365 1263Q380 1266 380 1285C375 1330 310 1380 247 1385z" fill="#ab8a94" />
      <path d="M230 1144L99 1242 230 1407 333 1242z" fill="url(#ghostPyramid)" opacity=".93" />
      <path d="M439 1218L467 1193 502 1201 508 1233 480 1252 487 1418 453 1411z" fill="#86bcc2" />
      <path d="M480 1252L508 1233 517 1397 487 1418z" fill="#a8f1f4" />
      <path d="M612 1290L620 1450C622 1482 650 1501 682 1501 715 1501 745 1482 746 1450L742 1290z" fill="url(#ghostDrum)" />
      <path d="M612 1280V1300C625 1325 655 1337 685 1337 715 1335 740 1320 742 1290V1260z" fill="#9c828e" />
      <path d="M537 1145C540 1100 580 1073 625 1073 680 1074 705 1100 705 1140L670 1255C655 1285 600 1285 588 1255z" fill="#a875b3" />
      <path d="M570 1210C600 1225 650 1225 690 1205L670 1255C655 1285 600 1285 588 1255z" fill="#b07abc" />
      <path d="M790 1325L830 1215 850 1195C870 1180 900 1183 897 1205V1245L810 1325Q800 1332 790 1328z" fill="#8fb597" />
      <path d="M830 1265L897 1210V1245L810 1325 790 1328z" fill="#b3d7b8" />
      <path d="M956 1285L1068 1159 1157 1231 1044 1325z" fill="#a3a68c" />
      <path d="M956 1270L1044 1325V1416L956 1345z" fill="#c5c69f" />
      <path d="M1044 1325L1157 1231V1322L1044 1416z" fill="#e0e3b6" />
      <ellipse cx="971" cy="1178" rx="82" ry="109" fill="url(#ghostBall)" />
      <g filter="url(#glow)" fill="#d4f0f3"><ellipse cx="974" cy="1164" rx="13" ry="16" /><ellipse cx="922" cy="1222" rx="13" ry="16" opacity=".8" /><ellipse cx="1028" cy="1218" rx="13" ry="17" opacity=".8" /><ellipse cx="965" cy="1075" rx="22" ry="5" opacity=".6" /></g>
      <path d="M1283 1059C1345 1060 1400 1080 1441 1112L1290 1240z" fill="#8dac87" />
      <path d="M1290 1240L1441 1112V1150L1289 1281z" fill="#c2ecb0" />
      <path d="M791 1362C792 1330 820 1311 854 1311 890 1311 916 1333 916 1362Q914 1380 905 1400L857 1520 803 1400Q792 1380 791 1362z" fill="#c58489" />
      <ellipse cx="854" cy="1365" rx="62" ry="54" fill="#b8878c" />
      <path d="M1394 1190L1389 1380 1405 1385 1412 1396 1428 1392 1440 1400 1455 1390 1470 1382 1478 1190z" fill="#c3b48e" />
      <path d="M1413 1230L1410 1385M1445 1230L1442 1390" stroke="#dacba4" strokeWidth="18" />
      <path d="M1430 1230v160M1462 1215v170M1398 1210l-2 160" stroke="#a89a78" strokeWidth="5" />
      <GearTop at="translate(1436 1197)" fill="#aea487" />

      {/* solids */}
      <path d="M52 107L62 240Q66 265 82 272L75 139z" fill="#8f5457" />
      <path d="M52 107C52 75 90 40 150 40 180 41 205 48 210 58L70 139Q54 130 52 107z" fill="#a36164" />
      <path d="M70 139L210 58 219 187 82 272z" fill="#794849" />
      <path d="M210 58L219 187 183 208z" fill="#855052" />

      <path d="M827 140L901 333C905 365 870 386 831 386 790 386 760 365 763 333z" fill="url(#cone)" />
      <g filter="url(#glow)" fill="#ff9a94"><ellipse cx="798" cy="305" rx="8" ry="42" transform="rotate(12 798 305)" /><ellipse cx="833" cy="290" rx="9" ry="36" transform="rotate(-22 833 290)" /></g>

      <path d="M571 417L580 612C582 645 612 663 649 663 690 663 718 640 718 610L712 417z" fill="url(#drum)" />
      <ellipse cx="641" cy="417" rx="70.500" ry="50" fill="#5b2032" />

      <path d="M172 525L182 662Q186 676 215 674C270 668 325 630 330 590L321 460z" fill="url(#oval)" />
      <path d="M172 525C172 490 240 450 295 445Q321 445 321 460C318 495 270 535 205 546Q172 546 172 525z" fill="#82192a" />

      <path d="M399 625L408 652 444 657 453 847 417 838z" fill="#189492" />
      <path d="M444 657L474 637 484 826 453 847z" fill="#147f7d" />
      <path d="M399 625L433 601 467 607 474 637 444 657 408 652z" fill="#1c9e9c" />

      <path d="M163 652L57 841 163 938z" fill="#1e5486" />
      <path d="M163 652L302 841 163 938z" fill="#37689b" />
      <path d="M235 750L302 841 280 832 250 790z" fill="#24486f" />

      <path d="M562 725L522 835C515 880 560 912 603 912 650 912 695 880 691 835L644 725z" fill="url(#frustum)" />
      <path d="M644 725L675 795 660 800 645 760z" fill="#4f1152" />
      <ellipse cx="602" cy="730" rx="42" ry="33" fill="#9a149a" />
      <path d="M602 735L570 751Q585 763 602 763 622 762 633 752z" fill="#861788" />

      <path d="M749 680V722C755 740 785 740 800 730L888 658V612z" fill="#12591a" />
      <path d="M749 680V722C755 740 775 740 788 735V695z" fill="#0e3d14" />
      <path d="M749 682C749 670 760 662 772 653L845 603C862 590 888 593 888 612 888 625 870 638 800 690 782 700 750 698 749 682z" fill="#17451d" />
      <path d="M760 665L830 655 800 690Q770 700 752 690z" fill="#17601e" />

      <path d="M947 470L1070 382 1165 450 1043 538z" fill="#83811f" />
      <path d="M947 470L1043 538V646L947 576z" fill="#62601a" />
      <path d="M975 490L1043 538V646L1015 626z" fill="#6e6c1b" />
      <path d="M1043 538L1165 450 1163 555 1043 646z" fill="#777717" />

      <path d="M1301 327L1309 490 1310 544 1302 420z" fill="#3d6d15" />
      <path d="M1301 327C1370 327 1430 345 1471 377L1309 490z" fill="#5da520" />
      <path d="M1309 490L1471 377 1470 423 1310 544z" fill="#529117" />

      <path d="M1413 655L1408 862 1420 880 1432 878 1440 886 1455 878 1470 884 1480 870 1495 865 1501 655z" fill="#856515" />
      <path d="M1440 690l-2 180M1478 680l-3 190" stroke="#9a7619" strokeWidth="14" />
      <path d="M1425 680l-3 185M1459 685l-3 180M1492 670l-4 180" stroke="#5b4410" strokeWidth="6" />
      <GearTop at="translate(1457 662)" fill="#a07717" />

      <ellipse cx="967" cy="798" rx="86" ry="114" fill="url(#ball)" />
      <g filter="url(#glow)" fill="#b4eeee"><ellipse cx="932" cy="772" rx="16" ry="22" /><ellipse cx="1012" cy="772" rx="16" ry="22" /><ellipse cx="972" cy="880" rx="18" ry="17" /><ellipse cx="960" cy="691" rx="22" ry="5" /></g>

      <path d="M668 1090L698 1218 705 1394 668 1225z" fill="#8b8dc6" />
      <path d="M698 1218L825 1118 831 1288 705 1394z" fill="#abaef0" />
      <path d="M656 901L695 1030 698 1218 665 1090z" fill="#13136f" />
      <path d="M656 901L822 935 695 1030z" fill="#2020a0" />
      <path d="M695 1030L822 935 825 1118 698 1218z" fill="#161691" />
    </g>

    {/* axis triad */}
    <g transform="translate(1 1)" fontFamily="'Liberation Sans', sans-serif" fontSize="10">
      <path d="M37 516v-9" stroke="#5555d8" strokeWidth="3" />
      <path d="M34 509l3-9 3 9z" fill="#3030c0" />
      <path d="M37 518l-8-4" stroke="#1a9a1a" strokeWidth="2" />
      <path d="M31 518l-7-9 10 3z" fill="#0c7f0c" />
      <path d="M37 518l8-4" stroke="#b02020" strokeWidth="2" />
      <path d="M43 518l8-9-10 3z" fill="#8c1010" />
      <text x="35" y="499" fill="#1616d8">Z</text>
      <text x="14" y="510" fill="#14d614">Y</text>
      <text x="54" y="510" fill="#e02020">X</text>
    </g>
  </svg>
);

/* ---------- catalog ---------- */

const L = '#dcebe5';
const M = '#bfd2ca';
const D = '#9db3aa';
const N = '#26267e';
const C = '#d3d7ea';

const catalog: [string, React.ReactNode][] = [
  ['Block', <><path d="M2 6l16-4 12 4-13 5z" fill={L} /><path d="M2 6l15 5v19L4 24z" fill={M} /><path d="M17 11l13-5-1 18-12 6z" fill={D} /></>],
  ['H Block', <><path d="M10 16l16 4-2 8-5 2-9-6z" fill="#ececf2" /><path d="M14 2l18 5-12 16L0 13z" fill={N} /><path d="M15 6l11 3-8 10L6 13z" fill={C} /><path d="M15 6l2 8 1 5L6 13z" fill="#b7bbd2" /></>],
  ['Slab', <><path d="M1 2l19 5 11 22-16-5z" fill={M} /><path d="M1 2l4 2 13 20-3 0z" fill={L} /><path d="M15 24l16 4v1l-14-3z" fill={D} /></>],
  ['H Slab', <><path d="M12 1l20 6-8 22L0 18z" fill={N} /><path d="M13 6l13 4-5 14L5 17z" fill="#dcdce4" /><path d="M13 6l13 4-1 3-12-3-6 7-2 0z" fill="#b5b8c8" /></>],
  ['Slot', <><path d="M4 5q3-4 8-3l15 4q3 2 0 5l-4 2L5 9z" fill={L} /><path d="M4 5l18 8v18l-7 0-10-6z" fill={M} /><path d="M22 13l6-5v18q-2 4-6 5z" fill={D} /></>],
  ['H Slot', <><path d="M12 20h10l-2 9h-7z" fill="#e6e6ec" /><path d="M8 1l24 8-5 20L0 18z" fill={N} /><path d="M8 6q4-3 8 2l9 11q2 5-3 6-5 1-8-5L7 12q-2-4 1-6z" fill={C} /></>],
  ['Cylinder', <><path d="M3 7v18q4 6 13 6t13-6V7z" fill={M} /><path d="M20 12v18l9-5V7z" fill={D} /><ellipse cx="16" cy="7" rx="13" ry="6" fill={L} /></>],
  ['H Cylinder', <><ellipse cx="16" cy="24" rx="8" ry="6" fill="#e8e8ee" /><path d="M16 1l16 12-16 15L0 13z" fill={N} /><ellipse cx="16" cy="13" rx="9" ry="8" fill="#c6cad9" /><ellipse cx="16" cy="17" rx="7" ry="4" fill="#fff" /></>],
  ['Ellipse', <><path d="M3 9l1 16q3 6 12 5 10-2 13-8V4z" fill={M} /><path d="M20 12v17l9-6V4z" fill={D} /><path d="M3 9Q8 2 20 1q9-1 9 3-2 6-13 9-12 2-13-4z" fill={L} /></>],
  ['H Ellipse', <><ellipse cx="16" cy="24" rx="9" ry="6" fill="#e8e8ee" /><path d="M16 1l16 12-16 15L0 13z" fill={N} /><ellipse cx="16" cy="13" rx="11" ry="7" transform="rotate(-30 16 13)" fill="#c6cad9" /><ellipse cx="16" cy="16" rx="6" ry="3" fill="#fff" /></>],
  ['Poly', <><path d="M1 14L10 5l14-3 7 9-2 10-13 10L5 25z" fill={M} /><path d="M10 5l14-3-8 13-15-1z" fill={L} /><path d="M16 31l2-14 6-15 7 9-2 10z" fill={D} /></>],
  ['H Poly', <><circle cx="24" cy="22" r="8" fill="#e6e6ea" /><path d="M13 2h19L20 28 0 24z" fill={N} /><path d="M14 7l9-2 1 10-9 7-8-3 1-8z" fill={C} /><path d="M18 6l4 8-6 7" fill="none" stroke="#9fa3bd" /></>],
  ['Sphere', <><circle cx="16" cy="16" r="15" fill={D} /><circle cx="15" cy="14" r="12" fill={M} /><ellipse cx="14" cy="10" rx="9" ry="6" fill="#e7f1f5" /><circle cx="14" cy="15" r="5" fill="#7fa7b8" opacity=".7" /><path d="M8 25q8 5 16-1-5 1-16 1z" fill="#f1f7f4" /></>],
  ['H Sphere', <><path d="M17 2h14l-4 4-13 17-14-7z" fill={N} /><path d="M9 10Q18 0 26 5l5 8q1 9-6 14-8 2-12-6l-3-4 3-5z" fill={C} stroke="#7d83ad" /><path d="M9 24l8 4" stroke="#ddd" strokeWidth="3" /></>],
  ['Pie', <><path d="M4 1l25 9-14 7z" fill={L} /><path d="M4 1l11 16-1 14L5 13z" fill={M} /><path d="M15 17q10-1 14-8l-2 15q-6 6-13 7z" fill={D} /></>],
  ['H Pie', <><circle cx="22" cy="11" r="9" fill="#e9e9ee" /><path d="M3 1l20 8-2 22L3 22z" fill={N} /><path d="M8 12q3-6 9-2 4 7 0 14-7 1-9-5l7-3z" fill={C} /></>],
  ['Torus', <><circle cx="16" cy="16" r="11.500" fill="none" stroke="#86a6a6" strokeWidth="7" /><circle cx="16" cy="16" r="11.500" fill="none" stroke="#d8ebe7" strokeWidth="3" /></>],
  ['H Torus', <><path d="M10 1l22 6-7 22-25-6z" fill={N} /><circle cx="16" cy="15" r="8" fill="none" stroke={C} strokeWidth="6" /></>],
  ['Cone', <><path d="M29 1L5 14Q-1 19 5 26q8 6 16 2z" fill={M} /><path d="M29 1L12 29q6 1 9-1z" fill={D} /><path d="M29 1L5 14l-2 4z" fill={L} /><path d="M29 1L7 27" stroke="#86a39d" /></>],
  ['H Cone', <><path d="M15 1h12l-6 5-9 22-12-4z" fill={N} /><path d="M26 3l5 23-20 1q-4-14 15-24z" fill={C} stroke="#8f94ba" strokeWidth=".6" /><path d="M11 24q10-2 20 3l-20 0z" fill="#b6bad2" /></>],
  ['Pyramid', <><path d="M17 1L1 30h30z" fill={M} /><path d="M17 1l14 29H10z" fill="#a9bbb0" /><path d="M17 1L1 30h9z" fill={L} /></>],
  ['H Pyramid', <><path d="M15 1h13l-3 3-14 24-11-4z" fill={N} /><path d="M26 3l5 22H8z" fill={C} stroke="#8f94ba" strokeWidth=".6" /><path d="M26 3l5 22-9-6z" fill="#b4b9d0" /></>],
  ['Part Cone', <><path d="M2 17Q2 5 17 1q9 0 12 8l2 8-6 10q-8 5-16 1-6-4-7-11z" fill={M} /><path d="M17 1q12 1 14 14-6 4-12-1-5-6-2-13z" fill={L} /><path d="M14 10L6 25l7 4 8-12z" fill={D} opacity=".7" /></>],
  ['H Part Cone', <><path d="M15 1h12l-5 4-10 23-12-4z" fill={N} /><path d="M26 4q-1 6 5 10-7 3-6 12H11Q8 10 26 4z" fill={C} stroke="#8f94ba" strokeWidth=".6" /></>],
  ['Bar', <><path d="M1 6l20-5 11 4-11 7z" fill={L} /><path d="M1 6l20 6-4 18L1 23z" fill="#d3ebe2" /><path d="M21 12l11-7-7 20-7 6z" fill={D} /></>],
  ['Rib', <><path d="M2 4l6-3 22 24 0 4-5 2z" fill={M} /><path d="M2 4l23 27-22-7z" fill={D} /><path d="M2 4l6-3 22 24-4 2z" fill={L} opacity=".6" /></>],
  ['L3 Circles', <><path d="M4 5q4 10 9 12l-3 11q6 4 12 1l-3-11q8-2 11-7z" fill={D} /><path d="M10 28l3-11 4 0-2 13z" fill={L} /><ellipse cx="17" cy="8" rx="14" ry="6" transform="rotate(14 17 8)" fill={M} /></>],
  ['Twist', <><path d="M10 6l7-5 14 4-2 8 2 3-9 4 0 8-8 3-3-8-8-7 8-2z" fill={M} /><path d="M17 1l14 4-10 6-11-5z" fill={L} /><path d="M11 14q12 2 18-1l2 3-9 5q-4 0-11-7zM20 22l2 5-8 3z" fill={D} /></>],
  ['Slab2', <><path d="M8 11L30 1l-3 29H1z" fill="#cbdfdc" /><path d="M30 1h1l-1 26-3 3z" fill={D} /><path d="M12 28l1-10" stroke="#2a4fd0" strokeWidth="1.200" /><path d="M6 28l7 1" stroke="#d22" strokeWidth="1.500" /></>],
  ['Cylinder2', <><path d="M10 1l14 1 7 7-6 14-9 8z" fill={D} /><path d="M22 2l9 7-9 16z" fill={L} /><path d="M2 8Q8 0 18 2q8 5 3 18-4 10-9 10Q3 30 1 20q-1-7 1-12z" fill={M} /><path d="M15 29l-4-13" stroke="#2a4fd0" strokeWidth="1.200" /><path d="M14 30h4" stroke="#d22" strokeWidth="1.500" /></>],
  ['Sphere2', <><circle cx="16" cy="16" r="15" fill={D} /><circle cx="15" cy="14" r="12" fill={M} /><ellipse cx="14" cy="9" rx="8" ry="5" fill="#e7f1f5" /><circle cx="17" cy="12" r="5" fill="#7fa7b8" opacity=".7" /><path d="M6 23q9 7 19 0-8-3-19 0z" fill="#f1f7f4" /><path d="M12 31h8" stroke="#e01818" strokeWidth="2" /></>],
  ['Partial Torus', <><path d="M4 4Q14 0 22 5q8 7 6 19l-4 7-10-8q6-3 3-8-3-5-11-5z" fill={M} /><path d="M6 10Q4 6 5 3q14-2 19 8 3 8-1 14l-5-3Q21 9 6 10z" fill={L} /><path d="M23 5q7 7 5 19l-4 7" fill="none" stroke={D} strokeWidth="2" /></>],
  ['Ellipsoid', <><ellipse cx="16" cy="16" rx="17" ry="11" transform="rotate(-35 16 16)" fill={D} /><ellipse cx="16" cy="15" rx="15" ry="9" transform="rotate(-35 16 15)" fill="#cfe6de" /><ellipse cx="13" cy="12" rx="7" ry="3" transform="rotate(-35 13 12)" fill="#edf6f3" /></>],
  ['H Ellipsoid', <><path d="M14 5L32 3l-2 3-6 22-24 1z" fill="#0f0d4f" /><path d="M32 4v21q-6 4-13 3-6-3-3-12 5-10 16-12z" fill="#bfc4f2" /></>],
];

const catalogActions: [string, React.ReactNode][] = [
  ['New', catalogGlyph],
  ['Open', <><path d="M1 1h5v13H1zM6 1l4 1v13l-4-1z" fill="#ddd" stroke="#444" /><path d="M12 8q3 1 1 5h2M13 13l-2 1" fill="none" stroke="#444" /></>],
  ['Save', <><path d="M6 1h8v9H6z" fill="#fff" stroke="#444" /><path d="M8 3h1M11 3h1M8 6h1" stroke="#222" /><path d="M1 5h9v10H1z" fill="#55563f" /><path d="M3 5h5v4H3zM4 12h3v3H4z" fill="#eee" /></>],
  ['Close', <><path d="M1 1h9v13H1z" fill="#ddd" stroke="#444" /><path d="M11 5v3M12 9q3 1 2 4l-2 1M12 9h2" fill="none" stroke="#444" /></>],
];

const catalogTabs = ['Starter', 'Shapes', 'Advshaps', 'FlexShapes', 'SheetMtl', 'Tools', 'Materials', 'Animatn', 'Surfaces', 'Textures', 'Bumps', 'Colors', 'Steel Frames', 'Tank'];

const CatalogBrowser = () => (
  <section className="shrink-0 border-t-[6px] border-[#cdcdcd] text-[11px] text-[#444]">
    <div className="flex h-[26px] items-center pb-1 pl-1">Catalog Browser<PanelKeys /></div>
    <div className="grid grid-cols-4 gap-[3px] pr-[3px] pl-px">
      {catalogActions.map(([name, art]) => (
        <button key={name} className="flex h-[18px] items-center border border-[#adadad] bg-[#e1e1e1] pl-1.5 text-black">
          <Ico>{art}</Ico>
          <span className="flex-1 pb-px text-center">{name}</span>
        </button>
      ))}
    </div>
    <div className="flex h-[21px] items-center bg-white pr-0.5">
      <button aria-label="Back" className="flex h-[18px] w-[18px] items-center justify-center border border-[#bbb] bg-[#eee]"><Ico><path d="M1 8l6-6v4h8v5H7v4z" fill="#a8a8a8" /></Ico></button>
      <input aria-label="Search catalog" placeholder="Search ..." className="h-full min-w-0 flex-1 px-1 pb-1 placeholder:text-[#555]" />
      <button aria-label="Clear catalog search" className="flex h-[18px] w-[18px] items-center justify-center border border-[#999] bg-[#efe9dc]"><Ico>{redX}</Ico></button>
    </div>
    <ul className="grid h-[156px] auto-rows-[75px] grid-cols-[repeat(auto-fill,75px)] border border-[#828790] bg-white pt-[3px]">
      {catalog.map(([name, art]) => (
        <li key={name} className="flex flex-col items-center text-black">
          <Ico size={30} box={32}>{art}</Ico>
          <span className="pt-1 leading-4 whitespace-nowrap">{name}</span>
        </li>
      ))}
    </ul>
    <div className="flex h-[23px] items-start gap-0.5 border-b border-[#cfcfcf]">
      {catalogTabs.map((t) => (
        <button key={t} className={t === 'Shapes' ? 'h-[21px] border-x border-b border-[#b5b5b5] bg-white px-1' : 'h-[21px] px-1.5'}>{t}</button>
      ))}
      <button aria-label="More catalogs" className="mt-1.5 mr-1 ml-auto"><Ico size={10} box={10}><path d="M0 2h10L5 7z" fill="#666" /></Ico></button>
    </div>
  </section>
);

/* ---------- status bar ---------- */

const lens = (inner: string) => (
  <><path d="M10 10l5 5" stroke="#444" strokeWidth="3" /><circle cx="6.500" cy="6.500" r="5.500" fill="#f4f4f4" stroke="#555" strokeWidth="1.300" /><path d={inner} fill="#fff" stroke="#555" /></>
);
const solidCube = (front: string, side: string) => (
  <><path d="M1 5h10v10H1z" fill={front} stroke="#333" strokeWidth=".7" /><path d="M1 5l4-4h10l-4 4z" fill="#dfeafa" stroke="#333" strokeWidth=".7" /><path d="M11 5l4-4v10l-4 4z" fill={side} stroke="#333" strokeWidth=".7" /></>
);

const statusTools: { name: string; on?: boolean; drop?: boolean; art: React.ReactNode }[] = [
  { name: 'Fit scene', art: lens('M4 3.500h3l2 2V9H4z') },
  { name: 'Zoom window', drop: true, art: lens('M4 4h5v5H4z') },
  { name: 'Camera', drop: true, art: <><path d="M1 6l3-3h8v8l-3 3H1z" fill="#fbe23a" stroke="#111" /><path d="M1 6h8v8M9 6l3-3" fill="none" stroke="#111" /><path d="M11 6h5M13.500 3.500v5" stroke="#e01818" strokeWidth="1.500" /></> },
  { name: 'View cube', drop: true, art: solidCube('#2a66ab', '#7ea9dc') },
  { name: 'Look at', drop: true, art: <><path d="M8 0l3 3H5zM0 7l3-3v6z" fill="#1d6fc0" /><path d="M4 8q4-5 9-1" fill="none" stroke="#333" /><path d="M7 8h6l2 2v5H9l-2-2z" fill="#eee" stroke="#333" /><path d="M7 8l2 2h6M9 10v5" fill="none" stroke="#333" /><circle cx="7" cy="6" r="2" fill="#1d6fc0" /></> },
  { name: 'Perspective', on: true, art: <><path d="M0 7l11-5 5-1-3 10-3 4H0z" fill="#2a66ab" /><path d="M0 7l11-5 5-1-5 6z" fill="#c4daf3" /><path d="M11 7l5-6-2 9-3 5z" fill="#6f9ed6" /></> },
  { name: 'Visibility', drop: true, art: <><circle cx="3.500" cy="9.500" r="3" fill="#dfe6ec" stroke="#4b5866" strokeWidth="1.300" /><circle cx="11" cy="11" r="3" fill="#dfe6ec" stroke="#4b5866" strokeWidth="1.300" /><path d="M1 8q0-5 4-6M14 9q1-5 2-6M6.500 10h1.500" fill="none" stroke="#4b5866" strokeWidth="1.300" /></> },
  { name: 'Render style', drop: true, art: solidCube('#8fb3e8', '#b9d0f2') },
  { name: 'Part mode', drop: true, art: bluePart },
  { name: 'Select tool', art: grayCursor },
  { name: 'Pick', on: true, art: cursor },
  { name: 'Box select', art: boxCursor },
];

const StatusBar = () => (
  <footer className="shrink-0 bg-[#f0f0f0] text-[11px] text-[#444]">
    <div className="flex h-6 items-center">
      <a href="http://www.ironcad.com" className="pl-[3px] text-[12px] text-[#1c63c4] underline">http://www.ironcad.com</a>
      <span className="ml-auto whitespace-pre">View size: 1582 x  557</span>
      <span className="ml-7">Units: in, deg</span>
      <div className="ml-5 flex items-center">
        {statusTools.map((s) => (
          <React.Fragment key={s.name}>
            <button aria-label={s.name} className={`flex h-[22px] w-6 items-center justify-center ${s.on ? 'bg-[#cdcdcd]' : ''}`}><Ico>{s.art}</Ico></button>
            {s.drop && <button aria-label={`${s.name} options`} className="mr-[3px]"><Caret /></button>}
          </React.Fragment>
        ))}
      </div>
      <div className="flex gap-0.5 pl-0.5">
        <Combo label="Pick filter" value="Any" size="h-[20px] w-[88px]" />
        <Combo label="Pick style" value="Default" size="h-[20px] w-[65px]" />
      </div>
      <button aria-label="Network" className="flex w-6 justify-center"><Ico><path d="M8 6v4M3 12v-2h10v2" fill="none" stroke="#234" /><path d="M5 1h6v5H5z" fill="#e01818" /><path d="M0 11h6v4H0z" fill="#5b86e0" stroke="#1b3c9b" /><path d="M9 11h6v4H9z" fill="#ccd64d" stroke="#1b3c9b" /></Ico></button>
    </div>
    <div className="flex h-0.5 bg-[#2c2d35]"><div className="ml-12 w-[344px] bg-[#dcdcdc]" /></div>
  </footer>
);

export default function App() {
  return (
    <div className="flex h-screen min-h-[900px] flex-col overflow-hidden bg-[#e6e6e6] font-['Open_Sans','Noto_Sans',sans-serif]">
      <TitleBar />
      <MenuBar />
      <Ribbon />
      <SelectionBar />
      <div className="flex min-h-0 flex-1">
        <ToolStrip />
        <main className="flex min-w-0 flex-1 flex-col">
          <DocTabs />
          <div className="flex min-h-0 flex-1 gap-1.5">
            <ScenePanel />
            <div className="mr-0.5 mb-0.5 min-w-0 flex-1 border-l-2 border-[#7d7d7d] bg-linear-to-b from-[#4f75a3] to-white">
              <Model />
            </div>
          </div>
          <CatalogBrowser />
        </main>
      </div>
      <StatusBar />
    </div>
  );
}
